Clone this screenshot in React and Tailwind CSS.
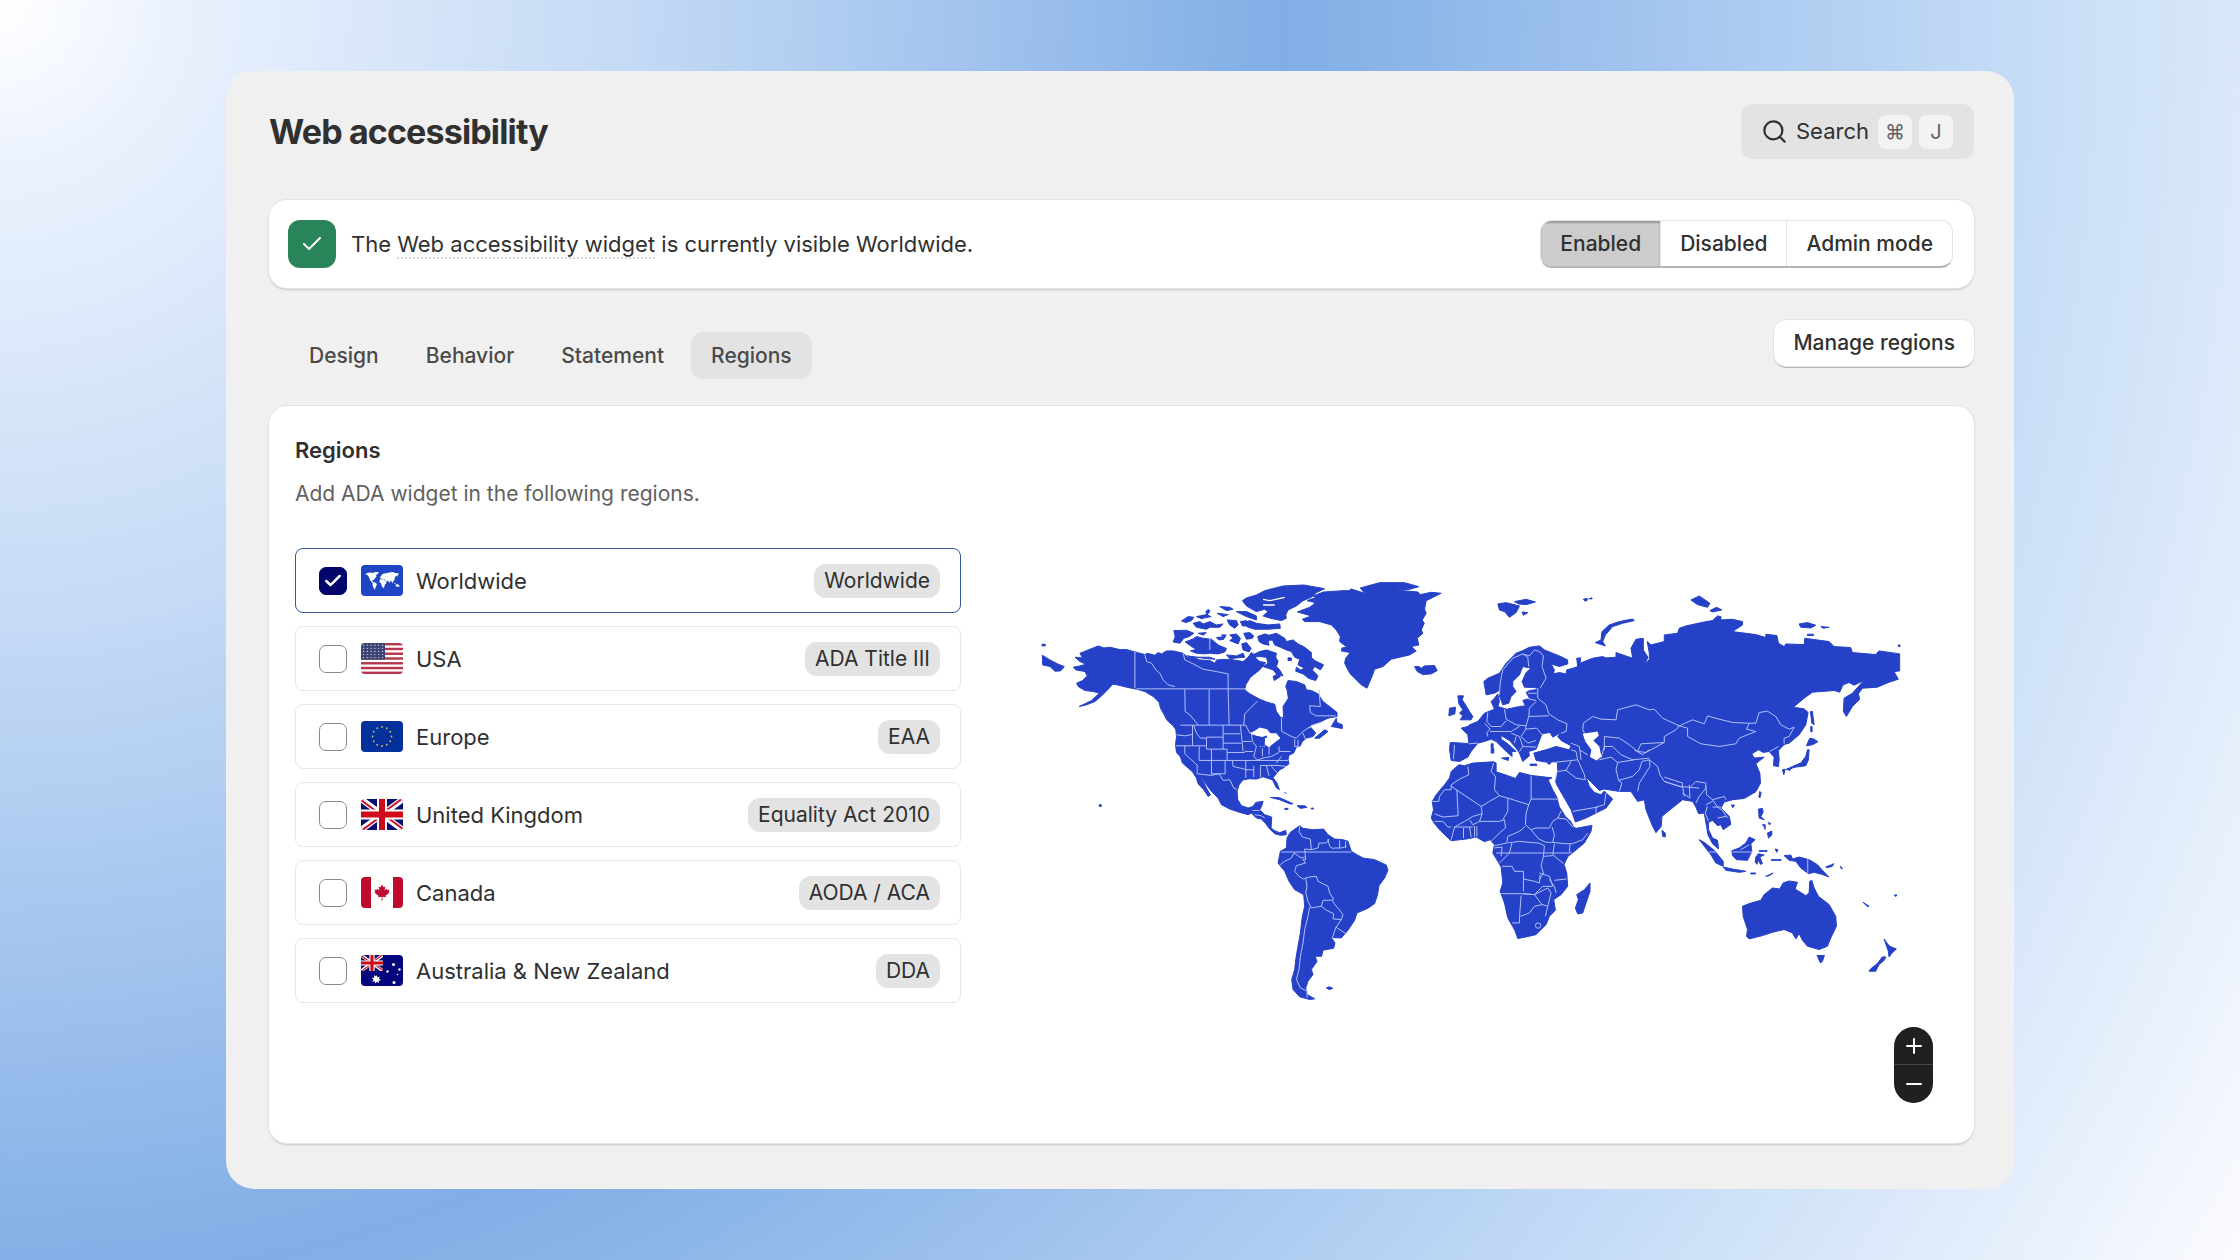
import React, { useState } from 'react'
import { Check, Minus, Plus, Search } from 'lucide-react'
import clsx from 'clsx'

const modes = ['Enabled', 'Disabled', 'Admin mode']
const tabs = ['Design', 'Behavior', 'Statement', 'Regions']

const regions = [
  { id: 'world', name: 'Worldwide', law: 'Worldwide', Flag: WorldFlag },
  { id: 'usa', name: 'USA', law: 'ADA Title III', Flag: UsaFlag },
  { id: 'eu', name: 'Europe', law: 'EAA', Flag: EuFlag },
  { id: 'uk', name: 'United Kingdom', law: 'Equality Act 2010', Flag: UkFlag },
  { id: 'ca', name: 'Canada', law: 'AODA / ACA', Flag: CanadaFlag },
  { id: 'au', name: 'Australia & New Zealand', law: 'DDA', Flag: AustraliaFlag },
]

function FlagFrame({ children }) {
  return <svg viewBox="0 0 42 31" className="w-[42px] h-[31px] rounded-[4px] shrink-0" aria-hidden="true">{children}</svg>
}

function WorldFlag() {
  return <FlagFrame>
    <rect width="42" height="31" fill="#1d45c4" />
    <path fill="#fff" d="M6 8l3-.5 3 .5 2-1 3.500 0-.5 2-2 1 .5 2-1.500 1-1 2-1.500 0 0 1.500 1.500 1.500-2-.5-2-2.500-1-3-2-2.500-2 .5zM11.500 17.500l2-.5 2.500 2-1 2.500-1.500 3.500-1-2.500-1-2.500zM18.500 16l.5-1.500 2-.5 3 1 1.500 3-1.500 1.500-1 3-1 .5-1.500-2.500-.5-2.500-1.500-.5zM19 13.500l.5-2 2-2.500 2-.5 5-1 3-.5 3 1 3.500 .5-1 1.500-1 2-.5-1.500-1.500 1.500-.5 3-1.500 1.500 0 2-1-1.500-1-1.500-1.500 2.500-1.500-2.500-1.500 1.500-1.500-2.500-1.500-.5-2-.5zM34 20l2.500-1 2 1.500-.5 1.500-2.500-.5zM32 17.500l3 1-1 .5z" />
  </FlagFrame>
}

function UsaFlag() {
  return <FlagFrame>
    <rect width="42" height="31" fill="#fff" />
    {[0, 1, 2, 3, 4, 5, 6].map(i => <rect key={i} y={i * 4.77} width="42" height="2.39" fill="#b8344a" />)}
    <rect width="24" height="16.7" fill="#3c4674" />
    {[0, 1, 2, 3, 4].map(r => [0, 1, 2, 3, 4, 5].map(c =>
      <circle key={`${r}${c}`} cx={2.5 + c * 3.8} cy={2.2 + r * 3.1} r=".6" fill="#dfe2ee" />
    ))}
  </FlagFrame>
}

function EuFlag() {
  return <FlagFrame>
    <rect width="42" height="31" fill="#04309c" />
    {[...Array(12)].map((_, i) => {
      let a = i * Math.PI / 6
      return <circle key={i} cx={21 + 9.5 * Math.sin(a)} cy={15.5 - 9.5 * Math.cos(a)} r=".9" fill="#c8be55" />
    })}
  </FlagFrame>
}

function UnionJack() {
  return <>
    <rect width="42" height="31" fill="#06106e" />
    <path d="M0 0L42 31M42 0L0 31" stroke="#fff" strokeWidth="6" />
    <path d="M0 1L21 16.500M42 30L21 14.500M42 -1L21 14.500M0 32L21 16.500" stroke="#cf1126" strokeWidth="2" />
    <path d="M21 0V31M0 15.500H42" stroke="#fff" strokeWidth="10" />
    <path d="M21 0V31M0 15.500H42" stroke="#cf0a1a" strokeWidth="6" />
  </>
}

function UkFlag() {
  return <FlagFrame><UnionJack /></FlagFrame>
}

function CanadaFlag() {
  return <FlagFrame>
    <rect width="42" height="31" fill="#fff" />
    <path fill="#bf0a30" d="M0 0H10V31H0zM32 0H42V31H32z" />
    <path fill="#bf0a30" d="M21 7.500l1.500 2.800 1.800-.8-.7 4 2-1.800.6 1.200 2.200-.3-.7 2.100.9.700-4.100 3.400.3 1.400-3.400-.4V24h-.8v-4.200l-3.400.4.3-1.400-4.100-3.400.9-.7-.7-2.100 2.200.3.6-1.200 2 1.800-.7-4 1.800.8z" />
  </FlagFrame>
}

function AustraliaFlag() {
  return <FlagFrame>
    <rect width="42" height="31" fill="#06067c" />
    <svg width="22" height="16" viewBox="0 0 42 31" preserveAspectRatio="none"><UnionJack /></svg>
    <g fill="#fff">
      <path d="M15.500 20l1 2.300 2.400-.8-1 2.300 2.200 1.200-2.400.7.300 2.400-2-1.400-1.600 1.900-.7-2.300-2.500.3 1.500-2-2-1.600 2.500-.5-.2-2.500 2 1.500z" />
      <circle cx="32.500" cy="9.500" r="1.500" /><circle cx="38.500" cy="14.500" r="1.200" />
      <circle cx="26.500" cy="16.500" r="1.200" /><circle cx="33" cy="27.500" r="1.500" />
      <circle cx="36.500" cy="19.500" r=".8" />
    </g>
  </FlagFrame>
}

// each part of the map has its own origin, 3 units to a pixel
const land = {
  northAmerica: [
    'M135 262L158 264 150 250 180 238 205 228 222 234 240 232 270 239 290 239 315 246 345 254 352 250 375 256 385 248 395 252 410 243 430 243 460 250 472 262 490 262 510 270 540 272 556 280 560 270 600 268 640 275 655 262 665 248 675 255 678 265 690 275 708 278 690 300 680 308 662 322 648 345 645 360 660 372 690 388 715 398 735 403 740 425 752 442 762 445 760 410 776 385 772 360 768 350 775 332 800 335 825 345 830 360 845 362 865 372 880 395 900 410 922 428 922 440 895 445 870 457 845 465 830 478 845 474 858 490 850 500 830 505 818 515 812 528 800 532 792 550 778 556 775 570 778 582 762 594 750 600 738 614 730 624 742 640 749 660 740 654 728 630 712 625 700 621 680 628 660 627 640 630 628 645 622 665 624 690 635 708 655 715 670 710 678 698 700 695 696 708 690 720 705 735 726 742 724 775 735 783 750 789 768 782 770 795 752 797 735 792 720 778 708 762 695 748 680 745 665 730 655 735 630 728 600 718 575 705 565 685 545 665 530 645 512 618 530 655 542 676 535 680 522 660 505 642 500 625 488 606 475 595 458 580 452 562 440 548 437 525 440 500 438 480 430 468 412 452 403 435 392 415 388 398 370 380 345 365 320 358 290 352 262 345 248 343 235 358 215 378 195 395 170 405 148 410 185 392 208 370 190 365 165 362 145 350 140 340 158 332 172 318 165 305 138 300 130 292 150 288 168 283 150 275z',
    'M37 256L60 270 85 283 103 290 92 303 75 304 60 290 38 285z',
    'M36 223h10v5h-10z',
    'M432 182L470 181 492 190 478 200 462 205 450 220 430 216 436 200z',
    'M466 216L490 207 500 200 520 205 545 208 565 225 590 236 585 246 565 252 540 250 525 252 500 250 482 243 500 238 485 230z',
    'M455 153L475 140 492 142 485 152 468 158z',
    'M490 160L510 155 520 162 540 155 560 165 580 162 570 172 540 172 530 178 500 172z',
    'M528 125l8-7 4 7-8 10z',
    'M570 110L600 112 610 118 590 122zM592 150L620 152 625 165 615 175 600 165zM620 125L650 125 680 138 680 150 650 140zM632 155L650 152 652 168 638 168zM562 130L595 134 580 140zM500 140l30-6 14 6-30 6zM505 190l24-2-8 8zM575 195l14 0-4 8zM470 258L500 262 540 262 556 268 530 266zM590 255L620 258 640 250 645 262 600 266z',
    'M638 92L650 84 680 75 705 62 760 48 822 45 885 56 860 68 845 82 820 92 800 108 775 120 768 135 770 145 755 152 722 145 700 138 715 125 705 118 680 125 650 108z',
    'M640 160L660 152 680 160 715 165 750 162 752 175 715 178 675 178 655 172z',
    'M600 195L620 192 632 205 625 222 600 212 610 205zM642 190L660 188 672 198 668 205 650 208zM636 222L650 218 664 235 658 246 640 240zM560 203L585 200 582 208 568 210z',
    'M684 200L705 192 718 196 740 190 765 205 770 215 790 210 805 222 822 230 845 248 845 262 855 272 882 285 872 300 855 290 848 300 865 318 858 332 838 326 820 312 798 304 800 292 812 300 825 295 805 285 810 268 795 262 785 245 770 240 752 232 735 225 728 210 715 212 718 226 700 222 688 215z',
    'M655 262L690 245 710 240 740 250 738 262 745 275 740 290 750 300 760 318 740 312 730 300 700 290 715 280 710 262 690 260z',
    'M730 320l14-8 8 8-18 12zM775 264l10 0 0 8-10 0z',
    'M803 126L840 112 858 98 832 92 860 82 850 78 882 66 940 62 958 62 965 57 1005 70 992 54 1050 38 1125 38 1168 50 1140 58 1098 60 1165 66 1172 74 1205 67 1235 70 1190 92 1185 118 1190 130 1178 150 1184 160 1175 180 1180 190 1163 205 1168 225 1145 230 1160 243 1140 255 1085 268 1060 290 1035 298 1027 320 1012 355 995 345 975 325 962 312 955 300 945 280 948 265 962 248 935 243 937 234 952 232 930 215 932 200 920 180 905 165 870 155 825 155 818 148 845 138z',
    'M1155 290L1168 290 1175 295 1185 288 1215 287 1223 302 1205 312 1180 314 1163 305z',
    'M905 470L920 445 922 458 938 465 938 476z',
    'M855 505L885 480 895 485 870 505z',
    'M722 683L750 684 790 702 782 703 750 690zM802 708L825 708 832 713 812 716zM765 716h10v3h-10zM845 715h6v3h-6zM764 668l6 3M208 705h6v5h-6z',
  ],
  southAmerica: [
    'M82 175L92 158 120 138 130 146 160 150 192 148 205 165 225 178 250 180 265 185 275 215 292 225 310 235 345 240 380 256 385 272 375 295 358 318 354 345 345 372 325 386 292 400 285 422 265 452 245 475 215 474 226 490 222 506 190 512 186 530 166 530 172 546 155 570 160 585 145 605 138 625 142 645 165 658 150 660 120 652 100 630 96 600 105 570 108 540 115 500 122 460 128 410 135 380 132 345 105 330 88 305 75 275 55 250 62 215 80 205z',
    'M200 625L210 622 220 627 208 630z',
  ],
  africa: [
    'M118 75L135 78 160 70 190 68 222 66 230 70 230 96 260 106 288 116 300 98 335 107 378 112 398 114 386 120 400 150 412 172 420 202 438 230 455 246 462 262 470 266 518 257 515 275 495 310 465 335 446 350 434 374 442 400 445 440 425 465 403 480 408 512 390 530 380 555 350 585 320 592 295 597 286 572 265 535 255 490 242 455 250 430 245 382 235 365 220 340 225 315 212 300 195 306 170 292 140 298 95 303 75 285 62 272 45 252 35 235 42 210 38 185 50 165 75 135 90 115 95 95z',
    'M512 430L512 455 500 490 490 520 475 523 468 505 477 480 472 465 495 450z',
  ],
  eurasia: [
    'M92 518L130 520 148 522 145 495 125 475 145 470 150 465 175 455 195 430 215 422 225 418 215 395 225 385 235 372 240 395 235 410 262 418 300 410 318 408 310 392 322 388 332 388 320 368 330 362 362 358 345 353 315 352 308 335 320 308 335 295 310 290 300 315 280 335 280 350 290 365 275 380 268 400 250 405 240 378 242 360 225 370 200 375 193 335 205 325 240 310 260 280 290 250 310 242 330 232 360 228 375 240 420 258 445 270 445 282 420 290 395 282 405 300 402 312 420 308 440 312 442 300 460 295 475 290 472 265 484 264 482 280 520 265 550 260 560 264 590 262 590 248 640 265 635 235 650 208 672 205 672 240 686 262 680 275 668 286 690 270 690 250 684 215 695 225 735 215 735 195 775 190 780 175 800 168 855 156 880 152 895 138 905 140 905 150 940 148 970 155 970 165 940 185 1010 194 1040 203 1040 193 1073 197 1078 220 1095 230 1100 222 1155 224 1157 205 1230 215 1245 230 1295 233 1300 248 1370 254 1380 243 1442 252 1442 303 1425 305 1438 328 1410 337 1375 352 1330 355 1318 372 1322 388 1300 410 1282 440 1273 425 1275 385 1300 370 1334 332 1305 346 1290 338 1272 345 1262 367 1245 362 1180 367 1155 385 1123 412 1155 417 1167 428 1160 465 1140 495 1110 520 1095 524 1078 542 1080 570 1078 590 1063 588 1065 562 1050 545 1032 548 1018 540 998 552 1005 565 1035 562 1010 582 1022 610 1024 640 1010 666 975 686 940 690 915 697 905 715 930 740 935 764 912 780 905 765 895 768 880 752 868 758 868 780 880 805 895 812 898 838 880 822 866 795 862 770 855 730 838 732 830 712 820 695 790 690 775 702 740 730 728 740 726 770 710 789 700 770 680 720 675 690 655 695 635 665 600 665 555 658 540 662 515 637 500 622 510 650 525 668 545 675 555 664 580 688 560 715 530 730 500 745 468 757 455 720 435 685 412 645 408 632 415 610 414 576 380 577 350 572 343 550 380 540 410 530 450 540 455 528 425 512 415 500 425 488 400 502 392 488 368 492 355 525 350 538 328 545 330 558 310 575 300 550 290 535 270 512 245 497 245 508 265 522 290 545 277 545 278 560 268 552 250 535 230 515 215 508 195 515 175 520 155 545 145 562 120 575 95 572 90 540z',
    'M115 378L132 378 128 390 135 400 150 425 160 440 155 450 122 450 130 438 120 430 130 420 118 402z',
    'M90 415L108 412 106 432 88 438z',
    'M215 522h6v12h-6zM215 536h8v14h-8zM246 565L268 563 266 572zM332 583h20v4h-20zM384 580l12-4-6 8z',
    'M235 102L260 98 300 108 290 128 270 142 255 125 240 120zM285 95L320 88 348 96 320 104 298 102zM308 126L325 128 312 136z',
    'M492 88l10-3 3 5-8 4zM508 86l10-2v3z',
    'M528 218L545 210 548 185 570 165 600 155 640 147 645 152 610 160 580 170 558 195 550 215 558 228z',
    'M815 90L840 78 872 100 865 112 835 104zM872 122L892 112 908 120 880 126z',
    'M1140 162L1165 158 1190 166 1175 174 1145 172zM1205 170L1230 172 1212 175zM1165 193h18v4h-18zM1438 225h5v5h-5z',
    'M1174 425L1180 425 1185 465 1178 460zM1175 470h4v16h-4z',
    'M1172 505L1185 508 1196 516 1180 525 1162 528z',
    'M1165 540L1170 540 1168 570 1160 588 1130 592 1100 600 1120 590 1145 580 1160 560zM1090 600L1098 598 1094 615zM1104 597l14-2-8 8z',
    'M1022 665l4 4-4 16-3-4zM936 706l10 0-5 8z',
    'M728 782L738 790 738 802 730 800z',
  ],
  oceania: [
    'M328 118L340 116 342 128 335 140 345 150 330 145zM355 190L368 184 368 196 358 205zM340 165l8 0 0 14-3-8zM358 158l6 3-3 5z',
    'M150 210L165 218 195 242 222 275 222 290 200 280 185 255z',
    'M222 292L250 298 290 305 270 308 230 302z',
    'M305 310h14v3h-14zM350 320L372 310 360 318z',
    'M248 243L270 235 290 220 300 202 318 210 305 222 308 245 295 272 262 270 250 258z',
    'M320 262L328 252 345 256 332 262 340 282 334 284 326 270 324 284 318 278zM378 238l8 2-3 8zM330 243h24v2h-24zM366 270h30v2h-30z',
    'M405 258L425 256 430 268 450 262 480 270 505 285 520 302 540 322 518 314 495 308 478 312 455 295 440 275 420 272z',
    'M530 292L548 285 554 282 550 290 535 294zM574 290l6 6-3 2z',
    'M280 410L300 402 335 392 345 375 370 355 392 358 402 340 420 334 445 338 438 358 470 378 480 370 482 335 488 332 495 355 508 380 540 405 560 440 562 470 545 505 535 530 510 540 475 530 460 512 450 492 440 508 430 490 405 480 370 488 340 498 300 508 292 500 295 480 282 440z',
    'M504 558L526 558 520 575 514 580z',
    'M705 508L715 522 722 530 742 538 728 552 720 562 718 545zM700 562L710 562 706 572 690 585 680 605 660 605 665 598 685 582z',
    'M642 398l18 12-6 0zM736 376l8 0-4 5z',
    'M-458 760h7v3h-7z',
  ],
}

const borders = {
  northAmerica: 'M315 246V355M320 357H648M345 254L350 275 365 280 378 300 390 310 400 330 415 345 435 350M460 250L465 270 490 282 520 298 560 305 595 312V357M465 358L466 425 480 435 505 465M538 358V465M595 357L598 465M452 466H648L660 490 700 478M683 394L645 432 642 465M755 445L756 485 790 502 800 505 820 485 850 465 880 456M868 360L872 410 840 408 842 428 858 438 918 438M438 528H528M440 495L465 498 488 494M488 466V528M492 468L500 490 512 505 530 505M530 502H580M530 502V538H592M580 466V538M580 492H632M580 520H635M632 466L640 545M465 528V552L502 586V612M508 530V572M508 572H775M545 538V615M592 538V572M592 548H645M640 515H665M645 545H670M586 572V612H545M608 572L610 590 640 597 650 600M648 572V625M502 612L545 617 568 612 580 632 600 630 612 655 622 660M665 490L668 515 680 530 672 560 685 572M690 530H705M698 530V560M718 532V555M748 530V545H782M748 548L725 560 700 565 680 572M648 600H672M672 588V622M692 590V622M710 588L718 618M690 587H745L770 590M725 590L745 612M740 580L755 560M795 508V530L805 530 805 510M820 490L828 510M540 205V240M668 722L690 722M675 735L695 738 705 745',
  southAmerica: 'M65 217H275M120 140L118 155 128 172 152 178 155 210 135 208 138 240 130 240 138 250 110 258 105 275 118 290 130 298 150 292 170 290 175 305 205 320 210 340 222 358M62 255L75 245 95 235 103 220 125 235 135 232M155 210L175 205 178 190 200 190 208 178M205 178L210 200 222 208M240 182V205M222 205L245 205 260 200M258 185V205M138 298L142 320 138 340 145 365 155 385 185 380 190 362 215 362 222 358M185 380L200 392 222 402 220 418 245 420 250 405 240 392 222 370 218 360M245 420L228 445 218 475M228 442L258 462M150 382L145 410 135 450 130 490 122 530 118 570 110 600 122 625 142 635V655',
  africa: 'M230 340H452M145 80L148 105 120 118 95 135 95 150 75 150 60 170 58 185 38 185M95 138L110 150 185 200 210 185 240 168M112 150L116 228 70 232 45 222M222 70L215 95 228 110 225 150 240 168 265 175 328 195 335 178V108M335 178H418M265 175L265 215 250 240M185 200L188 222 160 230 135 245 105 262 95 300M188 222L180 245 160 255 150 240M180 245L205 245 240 245 255 240 258 265 240 280 215 305M328 195L320 220 318 255 335 270 350 265 390 265 400 245 415 235 425 215M318 260L300 275 265 290 262 310 225 318M335 270L358 298 380 308 400 308 405 285 398 262M400 308L435 312 460 312 490 300 505 280M415 235L440 238 460 262M280 308L300 305 330 308 358 310 375 318 372 350 365 378 372 400 360 420M405 312L400 345 432 372M372 350L400 348M452 312L450 335 462 345M265 310L278 308 270 340 250 360 240 370M248 380H278L285 395 312 395 312 455M360 400L390 410 400 440 370 440 345 465 312 462M312 418L345 425 360 430 362 405M405 422L442 418M242 462H300L345 465 368 495 385 500M345 465L385 445 395 460 385 500 378 530M305 468L300 535 300 550 278 550M303 530L330 520 345 500 368 495M348 558a8 8 0 1 0 16 0a8 8 0 1 0-16 0M45 245H70L85 262 95 262M132 265V295M150 262L155 292M165 258V292M172 260V290M105 262H160M390 420L405 440 410 460M225 325L248 322 245 350',
  eurasia: 'M240 375L242 340 250 300 280 265 310 252 325 262 328 290M310 252L330 258 345 240 360 245 372 258 368 290 380 325 362 355M325 370H352M320 385L350 392M355 355L355 385 380 405 388 432 415 450 443 462 440 485 425 490M350 395L330 415 328 440 388 438M255 418L260 448 290 465 320 468 328 440M205 428L202 455 215 470 245 470 260 452M195 460L212 478 202 488 205 500M212 485H240L275 485 300 470M148 522L175 520M105 525L102 568M320 468L318 480 305 500 325 520 350 512M318 478L352 475 368 495M275 490L300 500 310 530 300 545M310 530L350 532M290 500L285 520M455 520L480 530 485 570M455 540L470 545 475 570 412 577M480 540L505 555M475 570L485 592 495 615 498 630 470 625 440 602 455 575M412 605L440 602M498 495L490 480 492 460 520 440 545 448 590 450 595 420 650 405 690 420 705 418 730 445 780 468 770 480 735 500 735 518 665 522 655 545 630 525 600 505 555 500V540M545 565L555 530 580 530 605 555 640 570 690 565M540 570L575 562 595 578 645 570M595 578L590 600 598 632 608 640 600 665M598 632L640 620 660 600 668 575 690 570M655 545L680 548 735 518M645 540L670 555 690 540M690 570L692 590 660 640 655 665M690 570L715 590 722 615 735 635 780 650 840 655M735 622L790 640 788 652 735 635M780 468L820 450 855 462 865 438 900 448 940 458 985 460 1010 460 1020 428 1045 424 1070 440 1085 465 1110 478 1125 472 1110 500 1095 505 1095 522M780 468L805 475 805 500 845 522 900 530 950 522 960 505 1010 485 982 478 990 460M790 650L795 680M810 645L812 685 790 670M815 650L830 635 860 640 860 655 840 680 830 700M860 650L862 675 880 690 915 680 920 690M880 690L895 712 910 722 925 745M860 705L880 695M865 710L858 730 868 755M880 712H905M895 745L920 740M1052 545L1078 530M412 610L408 632M460 725L500 718 535 712M530 730L530 712 555 705 560 670',
  oceania: 'M180 247H205M250 247H308M476 268V310M275 240L300 225',
}

const origins = {
  northAmerica: 'translate(0 0)',
  southAmerica: 'translate(690 630)',
  africa: 'translate(1170 510)',
  eurasia: 'translate(1170 0)',
  oceania: 'translate(1860 600)',
}

function WorldMap() {
  return <svg viewBox="0 0 2640 1305" className="w-full" role="img" aria-label="World map">
    {Object.keys(land).map(part => <g key={part} transform={origins[part]} strokeLinejoin="round">
      {land[part].map(d => <path key={d} d={d} fill="#2541c7" stroke="#2541c7" strokeWidth="3" />)}
      <path d={borders[part]} fill="none" stroke="#b3c0fa" strokeWidth="3" />
    </g>)}
    <g fill="#fff">
      <path d="M662 492L690 473 712 478 722 490 740 490 752 505 735 518 718 532 705 525 706 505 692 500 680 498z" />
      <path d="M1660 492L1705 485 1708 498 1692 512 1710 530 1716 560 1702 572 1682 562 1686 540 1668 515z" />
    </g>
    <path d="M698 535L696 505 712 500" fill="none" stroke="#2541c7" strokeWidth="6" />
    <path d="M700 88L720 92 765 82M700 105L735 105" fill="none" stroke="#fff" strokeWidth="4" />
  </svg>
}

function RegionRow({ region, checked, onChange }) {
  let { id, name, law, Flag } = region
  return <li>
    <label
      htmlFor={id}
      className={clsx(
        'flex items-center h-[65px] pl-[23px] pr-5 rounded-lg border cursor-pointer',
        checked ? 'border-[#36599c]' : 'border-[#e8e8e8]'
      )}
    >
      <span className="relative grid place-items-center mr-[14px]">
        <input
          id={id}
          type="checkbox"
          checked={checked}
          onChange={onChange}
          className="appearance-none w-7 h-7 rounded-[7px] border border-[#8a8a8a] bg-white checked:bg-[#02066b] checked:border-[#02066b]"
        />
        {checked && <Check className="absolute w-5 h-5 text-white pointer-events-none" strokeWidth={3} />}
      </span>
      <Flag />
      <span className="ml-[13px] text-[22px] leading-8">{name}</span>
      <span className="ml-auto px-[10px] rounded-xl bg-[#e3e3e3] text-[21px] leading-[34px]">{law}</span>
    </label>
  </li>
}

export default function App() {
  let [mode, setMode] = useState('Enabled')
  let [tab, setTab] = useState('Regions')
  let [selected, setSelected] = useState(['world'])

  const toggle = id => setSelected(
    selected.includes(id) ? selected.filter(s => s !== id) : [...selected, id]
  )

  return <div className="min-h-screen flex px-[226px] py-[71px] font-[Inter,sans-serif] text-[#303030] bg-[radial-gradient(circle_at_0_0,#ffffff_0%,#eaf1fd_7%,#c3d9f5_25%,#81aee6_50%,#c3dbf6_78%,#fbfbff_100%)]">
    <main className="flex-1 min-w-0 flex flex-col pl-[43px] pr-10 pt-[33px] pb-[46px] rounded-[28px] bg-[#f0f0f0]">
      <header className="flex items-center justify-between">
        <h1 className="text-[34px] leading-10 font-[650] tracking-tight">Web accessibility</h1>
        <button className="flex items-center h-[55px] pl-5 pr-[21px] rounded-xl bg-[#e3e3e3] text-[22px]">
          <Search className="w-[27px] h-[27px] mr-2" strokeWidth={2} />
          Search
          <kbd className="grid place-items-center w-[34px] h-[34px] ml-[9px] rounded-lg bg-[#f3f3f3] text-[20px] font-[Inter,sans-serif] text-[#616161]">⌘</kbd>
          <kbd className="grid place-items-center w-[34px] h-[34px] ml-[7px] rounded-lg bg-[#f3f3f3] text-[20px] font-[Inter,sans-serif] text-[#616161]">J</kbd>
        </button>
      </header>

      <section className="flex items-center h-[88px] mt-[41px] pl-[19px] pr-[21px] rounded-[18px] bg-white shadow-[0_0_0_1px_#e3e3e3,0_2px_2px_#c8c8c8]">
        <span className="grid place-items-center w-12 h-12 rounded-xl bg-[#29845a] text-white">
          <Check className="w-6 h-6" strokeWidth={2} />
        </span>
        <p className="ml-[15px] text-[22px] leading-7">
          The <span className="border-b-2 border-dotted border-[#d8d8d8]">Web accessibility widget</span> is currently visible Worldwide.
        </p>
        <div className="ml-auto flex h-12 rounded-xl overflow-hidden border border-[#e3e3e3] border-b-2 border-b-[#b5b5b5] divide-x divide-[#e3e3e3]">
          {modes.map(m => <button
            key={m}
            aria-pressed={m === mode}
            onClick={() => setMode(m)}
            className={clsx('px-[19px] text-[21px] font-medium', m === mode && 'bg-[#cccccc] shadow-[inset_0_2px_2px_#999999]')}
          >
            {m}
          </button>)}
        </div>
      </section>

      <div className="flex items-start justify-between mt-8">
        <div role="tablist" className="flex gap-[7px] pl-5 pt-3">
          {tabs.map(t => <button
            key={t}
            role="tab"
            aria-selected={t === tab}
            onClick={() => setTab(t)}
            className={clsx('h-[47px] px-5 rounded-xl text-[21px] font-medium text-[#4a4a4a]', t === tab && 'bg-[#e3e3e3]')}
          >
            {t}
          </button>)}
        </div>
        <button className="h-[46px] px-[19px] rounded-xl bg-white text-[21px] font-medium shadow-[0_0_0_1px_#e3e3e3,0_2px_0_#b5b5b5]">
          Manage regions
        </button>
      </div>

      <section className="flex-1 mt-[27px] px-[26px] pt-[30px] pb-10 rounded-[18px] bg-white shadow-[0_0_0_1px_#e3e3e3,0_2px_2px_#c8c8c8] flex flex-col">
        <h2 className="text-[22px] leading-7 font-semibold">Regions</h2>
        <p className="mt-4 text-[21px] leading-7 text-[#616161]">Add ADA widget in the following regions.</p>
        <div className="flex-1 mt-10 grid grid-cols-[666px_minmax(0,1fr)]">
          <ul className="flex flex-col gap-[13px]">
            {regions.map(r => <RegionRow
              key={r.id}
              region={r}
              checked={selected.includes(r.id)}
              onChange={() => toggle(r.id)}
            />)}
          </ul>
          <div className="relative pt-[22px] pl-[69px] pr-[39px]">
            <WorldMap />
            <div className="absolute right-[15px] bottom-0 w-[39px] flex flex-col rounded-full overflow-hidden bg-[#202020] text-white divide-y divide-[#444444]">
              <button aria-label="Zoom in" className="grid place-items-center h-[38px]"><Plus className="w-6 h-6" strokeWidth={2} /></button>
              <button aria-label="Zoom out" className="grid place-items-center h-[38px]"><Minus className="w-6 h-6" strokeWidth={2} /></button>
            </div>
          </div>
        </div>
      </section>
    </main>
  </div>
}
